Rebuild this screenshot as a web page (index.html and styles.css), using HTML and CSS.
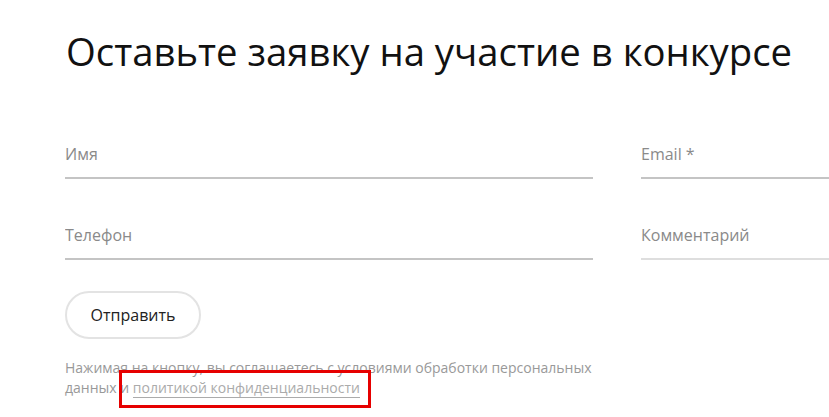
FILE: index.html
```html
<!DOCTYPE html>
<html lang="ru">
<head>
<meta charset="utf-8">
<title>Заявка</title>
<link rel="stylesheet" href="styles.css">
</head>
<body>
<div class="page">
  <h1 class="title">Оставьте заявку на участие в конкурсе</h1>
  <form class="form">
    <div class="grid">
      <input class="field" type="text" placeholder="Имя">
      <input class="field" type="email" placeholder="Email *">
      <input class="field" type="tel" placeholder="Телефон">
      <input class="field field-light" type="text" placeholder="Комментарий">
    </div>
    <button class="submit" type="button">Отправить</button>
    <p class="note">Нажимая на кнопку, вы соглашаетесь с условиями обработки персональных данных и <a class="policy" href="#">политикой конфиденциальности</a></p>
  </form>
  <div class="highlight"></div>
</div>
</body>
</html>
```
FILE: styles.css
```css
html, body {
  margin: 0;
  padding: 0;
  background: #fff;
  overflow: hidden;
}
.page {
  position: relative;
  width: 829px;
  height: 417px;
  padding: 28px 0 0 65px;
  box-sizing: border-box;
  overflow: hidden;
  font-family: "Open Sans", "Noto Sans", sans-serif;
}
.title {
  margin: 0 0 0 1px;
  font-size: 38.3px;
  line-height: 46px;
  font-weight: 400;
  color: #111;
  white-space: nowrap;
}
.form {
  margin-top: 63px;
}
.grid {
  display: grid;
  grid-template-columns: 528px 528px;
  column-gap: 48px;
  row-gap: 39px;
}
.field {
  display: block;
  width: 100%;
  height: 42px;
  box-sizing: border-box;
  margin: 0;
  padding: 0 0 6px 0;
  border: 0;
  border-bottom: 2px solid #c4c4c4;
  outline: none;
  background: transparent;
  font-family: "Open Sans", "Noto Sans", sans-serif;
  font-size: 16px;
  color: #333;
}
.field::placeholder {
  color: #8a8a8a;
  opacity: 1;
}
.field-light {
  border-bottom-color: #dedede;
}
.submit {
  display: block;
  margin-top: 31px;
  width: 136px;
  height: 48px;
  box-sizing: border-box;
  border: 2px solid #e3e3e3;
  border-radius: 24px;
  background: #fff;
  font-family: "Open Sans", "Noto Sans", sans-serif;
  font-size: 16px;
  color: #222;
  padding: 0;
}
.note {
  margin: 19px 0 0 0;
  width: 530px;
  font-size: 14px;
  line-height: 20px;
  color: #999;
}
.policy {
  color: #ababab;
  text-decoration: none;
  border-bottom: 1px solid #ababab;
}
.highlight {
  position: absolute;
  left: 119px;
  top: 370px;
  width: 252px;
  height: 38px;
  box-sizing: border-box;
  border: 3px solid #e60000;
}
```
